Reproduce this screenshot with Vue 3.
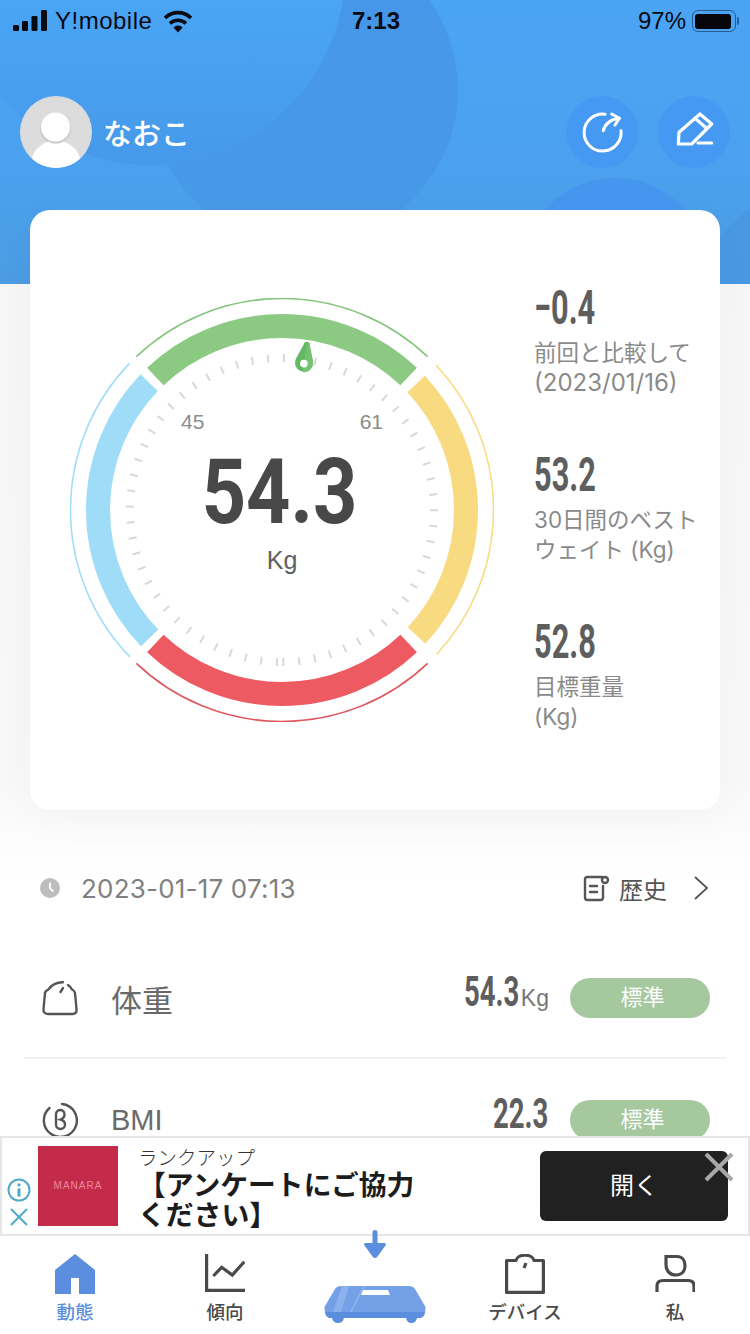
<script setup>
const cx = 212
const cy = 212

function polar(r, deg) {
  const a = ((deg - 90) * Math.PI) / 180
  return [cx + r * Math.cos(a), cy + r * Math.sin(a)]
}

function arc(r, from, to) {
  const [x1, y1] = polar(r, from)
  const [x2, y2] = polar(r, to)
  return `M${x1.toFixed(2)} ${y1.toFixed(2)}A${r} ${r} 0 0 1 ${x2.toFixed(2)} ${y2.toFixed(2)}`
}

const zones = [
  { color: '#8cca84', line: '#84c47c', from: -43.5, to: 43.5 },
  { color: '#f8da80', line: '#f8da80', from: 46.8, to: 133 },
  { color: '#ee5a62', line: '#e0585e', from: 136.5, to: 223.5 },
  { color: '#9fdcf8', line: '#9fdcf8', from: 226, to: 313.8 }
]

const ticks = []
for (let k = 0; k < 61; k++) {
  const deg = 179.5 - k * 5.96
  const [x1, y1] = polar(148, deg)
  const [x2, y2] = polar(156, deg)
  ticks.push({ x1, y1, x2, y2 })
}

const stats = [
  { value: '−0.4', lines: ['前回と比較して', '(2023/01/16)'] },
  { value: '53.2', lines: ['30日間のベスト', 'ウェイト (Kg)'] },
  { value: '52.8', lines: ['目標重量', '(Kg)'] }
]
</script>

<template>
  <div class="screen">
    <div class="top">
      <div class="blob blob-b"></div>
      <div class="blob blob-a"></div>
      <div class="blob blob-c"></div>
      <div class="blob blob-d"></div>
      <div class="status">
        <div class="status-left">
          <svg width="34" height="22" viewBox="0 0 34 22" fill="#0a0a12">
            <rect x="0" y="15" width="6" height="6" rx="1.2" />
            <rect x="9" y="11" width="6" height="10" rx="1.2" />
            <rect x="18.5" y="6" width="6" height="15" rx="1.2" />
            <rect x="28" y="0" width="6" height="21" rx="1.2" />
          </svg>
          <span class="carrier">Y!mobile</span>
          <svg class="wifi" width="30" height="24" viewBox="0 0 30 24" fill="none" stroke="#0a0a12" stroke-width="3.6">
            <path d="M2 9a18.5 18.5 0 0 1 26 0" />
            <path d="M7 14.5a11.5 11.5 0 0 1 16 0" />
            <path d="M15 23.5l-4.600-5a6.400 6.400 0 0 1 9.200 0z" fill="#0a0a12" stroke="none" />
          </svg>
        </div>
        <span class="clock">7:13</span>
        <div class="status-right">
          <span class="pct">97%</span>
          <div class="battery"><div class="battery-fill"></div></div>
          <div class="battery-tip"></div>
        </div>
      </div>
      <div class="profile">
        <div class="avatar">
          <svg width="72" height="72" viewBox="0 0 72 72">
            <circle cx="36" cy="36" r="36" fill="#dcdcdc" />
            <circle cx="35.5" cy="33" r="15.5" fill="#cdcdcd" />
            <circle cx="35.5" cy="31" r="14.5" fill="#fff" />
            <path d="M12 62.800C13 54 22 48 28 45.500c5 3 11 3 15.500 0C50 48 59 54 60 62.800A36 36 0 0 1 12 62.800z" fill="#fff" />
          </svg>
        </div>
        <span class="name">なおこ</span>
        <div class="round-btn first">
          <svg width="42" height="42" viewBox="0 0 42 42" fill="none" stroke="#fff" stroke-width="3" stroke-linecap="round" stroke-linejoin="round">
            <path d="M24 3.200A18.500 18.500 0 1 0 40 19.700" />
            <path d="M22.300 19.700C24 13 30 8.500 38.300 7.300" />
            <path d="M30.700 3l7.600 4.300L34 14" />
          </svg>
        </div>
        <div class="round-btn">
          <svg width="42" height="42" viewBox="0 0 42 42" fill="none" stroke="#fff" stroke-width="3.2" stroke-linejoin="round" stroke-linecap="round">
            <path d="M5.300 33L6 21.300 27 3l11.700 10-20 20z" />
            <path d="M22 7.300l11 9.500" />
            <path d="M25 32h13.700" />
          </svg>
        </div>
      </div>
    </div>

    <div class="card">
      <div class="gauge">
        <svg width="424" height="424" viewBox="0 0 424 424" fill="none">
          <g v-for="z in zones" :key="z.from">
            <path :d="arc(211.5, z.from, z.to)" :stroke="z.line" stroke-width="1.6" />
            <path :d="arc(184, z.from, z.to)" :stroke="z.color" stroke-width="24" />
          </g>
          <line
            v-for="(t, i) in ticks"
            :key="i"
            :x1="t.x1"
            :y1="t.y1"
            :x2="t.x2"
            :y2="t.y2"
            stroke="#d8d8d8"
            stroke-width="2"
          />
          <g transform="rotate(8.5 212 212)">
            <path d="M209 45a3 3 0 0 1 6 0l5.500 15a9 9 0 1 1-17 0z" fill="#63b963" />
            <path d="M212 42a3 3 0 0 1 3 3l5.500 15a9 9 0 0 1-8.500 12.500z" fill="#76c274" />
            <circle cx="212" cy="64" r="3.8" fill="#fff" />
          </g>
        </svg>
        <div class="gauge-text">
          <div class="range"><span>45</span><span>61</span></div>
          <div class="weight"><span>54.3</span></div>
          <div class="unit">Kg</div>
        </div>
      </div>
      <div class="stats">
        <div v-for="s in stats" :key="s.value" class="stat">
          <div class="stat-value"><span>{{ s.value }}</span></div>
          <div v-for="l in s.lines" :key="l" class="stat-line">{{ l }}</div>
        </div>
      </div>
    </div>

    <div class="meta">
      <svg width="20" height="20" viewBox="0 0 20 20">
        <circle cx="10" cy="10" r="10" fill="#bdbdbd" />
        <path d="M10 4.500V10.500l3.500 3" fill="none" stroke="#fff" stroke-width="1.8" />
      </svg>
      <span class="date">2023-01-17 07:13</span>
      <svg class="hist-icon" width="28" height="28" viewBox="0 0 28 28" fill="none" stroke="#555" stroke-width="2.4" stroke-linecap="round">
        <path d="M19 3H4.500Q2 3 2 5.500v18Q2 26 4.500 26h13q2.500 0 2.500-2.500V12" />
        <path d="M7 12h7M7 18h7" />
        <circle cx="22" cy="6" r="3" />
      </svg>
      <span class="hist">歴史</span>
      <svg width="16" height="26" viewBox="0 0 16 26" fill="none" stroke="#555" stroke-width="1.8">
        <path d="M2 2l12 11L2 24" />
      </svg>
    </div>

    <div class="row divided">
      <svg width="36" height="36" viewBox="0 0 36 36" fill="none" stroke="#555" stroke-width="2.4" stroke-linejoin="round" stroke-linecap="round">
        <path d="M21 2.200C15 2 9 5 6.500 9.500 4 10.500 3.300 11 3 13L1.500 29Q1.200 34 6.500 34h24q4.500 0 4-5L33 13q-.5-2.500-3-3.500-1.500-3-4-4.500" />
        <path d="M21 8l-2.500 4" />
      </svg>
      <span class="row-name">体重</span>
      <div class="row-value"><span class="num">54.3</span><span class="row-unit">Kg</span></div>
      <div class="pill">標準</div>
    </div>
    <div class="row">
      <svg width="36" height="36" viewBox="0 0 36 36" fill="none" stroke="#555" stroke-width="2.4" stroke-linecap="round">
        <path d="M20 2A16.500 16.500 0 1 1 7.500 6" />
        <path d="M14 12.500C14 6.500 22.500 6.500 22.500 12.500c0 2.500-1.500 4-4 5 3 .8 4.500 2.500 4.500 5 0 6-9 6-9 0z" />
      </svg>
      <span class="row-name bmi">BMI</span>
      <div class="row-value"><span class="num">22.3</span></div>
      <div class="pill">標準</div>
    </div>

    <div class="bottom">
      <div class="ad">
        <div class="ad-marks">
          <svg width="24" height="24" viewBox="0 0 24 24" fill="none" stroke="#4fa9c9" stroke-width="2">
            <circle cx="12" cy="12" r="10.5" />
            <path d="M12 10.500v8" stroke-width="3" />
            <circle cx="12" cy="6.800" r="1.6" fill="#4fa9c9" stroke="none" />
          </svg>
          <svg width="22" height="22" viewBox="0 0 22 22" fill="none" stroke="#4fa9c9" stroke-width="2">
            <path d="M3 3l16 16M19 3L3 19" />
          </svg>
        </div>
        <div class="ad-logo">MANARA</div>
        <div class="ad-copy">
          <div class="ad-brand">ランクアップ</div>
          <div class="ad-title">【アンケートにご協力<br />ください】</div>
        </div>
        <div class="ad-open">開く</div>
        <svg class="ad-close" width="32" height="32" viewBox="0 0 32 32" fill="none" stroke="#a8a8a8" stroke-width="4">
          <path d="M3 3l26 26M29 3L3 29" />
        </svg>
      </div>
      <nav class="tabs">
        <div class="tab active">
          <svg width="40" height="40" viewBox="0 0 40 40" fill="#5b8ede">
            <path d="M20 0l20 16v24H24V24h-8v16H0V16z" />
          </svg>
          <span>動態</span>
        </div>
        <div class="tab">
          <svg width="40" height="40" viewBox="0 0 40 40" fill="none" stroke="#4a4a4a" stroke-width="3.2">
            <path d="M1.600 0v36.400H40" />
            <path d="M8.300 22l8.400-8.700L27.300 21 39.300 7.700" />
          </svg>
          <span>傾向</span>
        </div>
        <div class="tab center">
          <svg class="drop" width="24" height="30" viewBox="0 0 24 30" fill="#5b8ede">
            <path d="M9.500 2.500a2.500 2.500 0 0 1 5 0V13H21q3 0 1.500 2.500l-8 11q-2.500 3-5 0l-8-11Q0 13 3 13h6.500z" />
          </svg>
          <svg class="scale" width="102" height="38" viewBox="0 0 102 38">
            <path d="M1 24h100q1 5-4 8h-4q-1 5-5.500 5T82 32H20q-1 5-6 5t-6-5H5q-5-3-4-8z" fill="#5b8ede" />
            <path d="M17 0h68q4 0 6 3l10 17q1.500 4-1 6H2q-2.500-2-1-6L11 3q2-3 6-3z" fill="#74a0e8" />
            <path d="M18 0h7L17 26H9z" fill="#8cb2ee" />
            <path d="M39 0h2L28 26h-2z" fill="#8cb2ee" />
            <path d="M39 4h25l2 5H37z" fill="#fff" />
          </svg>
        </div>
        <div class="tab">
          <svg width="40" height="40" viewBox="0 0 40 40" fill="none" stroke="#4a4a4a" stroke-width="3.2" stroke-linejoin="round">
            <path d="M1.600 38.400V6.500H11C12-.5 28-.5 29 6.500h9.400v31.900z" />
            <path d="M21 9l-2 5" />
          </svg>
          <span>デバイス</span>
        </div>
        <div class="tab">
          <svg width="40" height="40" viewBox="0 0 40 40" fill="none" stroke="#4a4a4a" stroke-width="3.2">
            <path d="M11 2.500h11c5 0 8 3.500 8 9 0 6.500-4 9.500-9 9.500-6 0-10-4-10-10z" />
            <path d="M2 38v-6q0-5.500 6-5.500h25q6 0 6 5.500v6" />
          </svg>
          <span>私</span>
        </div>
      </nav>
    </div>
  </div>
</template>

<style scoped>
.screen {
  position: relative;
  width: 750px;
  height: 1334px;
  overflow: hidden;
  font-family: "Liberation Sans", "Noto Sans CJK JP", sans-serif;
  background: linear-gradient(#f6f6f6 284px, #f8f8f8 780px, #fff 880px);
  color: #555;
}
.top {
  position: relative;
  height: 284px;
  overflow: hidden;
  background: linear-gradient(#4aa4f4, #4ba1ee 60%, #4b9ce2);
}
.blob {
  position: absolute;
  border-radius: 50%;
}
.blob-a {
  left: -45px;
  top: -225px;
  width: 390px;
  height: 390px;
  background: linear-gradient(#4aa6f6 55%, #4799e9);
}
.blob-b {
  left: 148px;
  top: -65px;
  width: 310px;
  height: 310px;
  background: linear-gradient(#4697ea, #4899e6);
}
.blob-c {
  left: 530px;
  top: 178px;
  width: 170px;
  height: 150px;
  background: #4696f0;
}
.blob-d {
  left: 705px;
  top: 195px;
  width: 190px;
  height: 190px;
  background: #4898e4;
}
.status {
  position: relative;
  z-index: 2;
  display: flex;
  align-items: center;
  justify-content: space-between;
  height: 42px;
  padding: 0 11px 0 13px;
  font-size: 24px;
  color: #0a0a14;
}
.status-left {
  display: flex;
  align-items: center;
  gap: 8px;
  width: 300px;
}
.carrier {
  letter-spacing: 0.5px;
}
.wifi {
  margin-left: 3px;
}
.clock {
  font-weight: 700;
}
.status-right {
  display: flex;
  align-items: center;
  justify-content: flex-end;
  width: 300px;
}
.pct {
  margin-right: 6px;
}
.battery {
  box-sizing: border-box;
  width: 44px;
  height: 22px;
  padding: 2.5px;
  border: 1.5px solid #2b5c8c;
  border-radius: 6px;
}
.battery-fill {
  width: 95%;
  height: 100%;
  border-radius: 3px;
  background: #05050a;
}
.battery-tip {
  width: 2px;
  height: 8px;
  margin-left: 1px;
  border-radius: 0 2px 2px 0;
  background: #2b5c8c;
}
.profile {
  position: relative;
  z-index: 2;
  display: flex;
  align-items: center;
  margin-top: 54px;
  padding: 0 20px;
}
.avatar {
  height: 72px;
}
.name {
  flex: 1;
  margin-left: 11px;
  font-size: 29px;
  font-weight: 500;
  color: #fff;
}
.round-btn {
  display: flex;
  align-items: center;
  justify-content: center;
  width: 72px;
  height: 72px;
  border-radius: 50%;
  background: #4599f3;
}
.round-btn.first {
  margin-right: 20px;
}
.card {
  position: relative;
  z-index: 3;
  box-sizing: border-box;
  display: flex;
  width: 690px;
  height: 600px;
  margin: -74px 0 0 30px;
  padding: 88px 0 0 40px;
  border-radius: 20px;
  background: #fff;
  box-shadow: 0 10px 40px rgba(0, 0, 0, 0.03);
}
.gauge {
  position: relative;
  width: 424px;
  height: 424px;
}
.gauge-text {
  position: absolute;
  left: 0;
  right: 0;
  top: 112px;
  text-align: center;
}
.range {
  display: flex;
  justify-content: space-between;
  padding: 0 111px;
  font-size: 21px;
  color: #8c8c8c;
}
.weight {
  margin-top: 8px;
  margin-left: -4px;
  height: 102px;
  font-family: Roboto, sans-serif;
  font-size: 90px;
  line-height: 102px;
  font-weight: 700;
  color: #484848;
}
.weight span {
  display: inline-block;
  transform: scaleX(0.86);
}
.unit {
  margin-top: 2px;
  font-size: 25px;
  color: #606060;
}
.stats {
  margin: -12px 0 0 40px;
}
.stat {
  height: 167px;
}
.stat-value {
  height: 44px;
  margin-bottom: 8px;
  font-family: Roboto, sans-serif;
  font-size: 48px;
  line-height: 44px;
  font-weight: 700;
  color: #5e5e5e;
}
.stat-value span {
  display: inline-block;
  transform: scaleX(0.64);
  transform-origin: left;
}
.stat-line {
  font-family: Inter, "Noto Sans CJK JP", sans-serif;
  font-size: 22.5px;
  line-height: 30px;
  color: #8a8a8a;
  white-space: nowrap;
}
.stat:first-child .stat-line:last-child {
  font-size: 24px;
}
.meta {
  display: flex;
  align-items: center;
  margin-top: 62px;
  padding: 0 41px 0 40px;
  height: 32px;
}
.date {
  flex: 1;
  margin-left: 21px;
  font-family: Inter, sans-serif;
  font-size: 26px;
  letter-spacing: 0.2px;
  color: #808080;
}
.hist {
  margin: 0 26px 0 8px;
  font-size: 24px;
}
.row {
  display: flex;
  align-items: center;
  margin: 0 24px;
  padding: 0 16px 0 18px;
  height: 122px;
}
.meta + .row {
  margin-top: 45px;
}
.divided {
  box-sizing: border-box;
  height: 110px;
  padding-bottom: 10px;
  border-bottom: 2px solid #f2f2f2;
}
.row-name {
  flex: 1;
  margin-left: 33px;
  font-size: 31px;
  color: #6a6a6a;
}
.row-name.bmi {
  font-size: 29px;
}
.row-value {
  display: flex;
  align-items: baseline;
  margin-right: 21px;
  margin-bottom: 14px;
}
.num {
  display: inline-block;
  width: 56px;
  font-family: Roboto, sans-serif;
  font-size: 43px;
  font-weight: 700;
  color: #5e5e5e;
  white-space: nowrap;
  transform: scaleX(0.64);
  transform-origin: left;
}
.row-unit {
  margin-left: 1px;
  font-size: 23px;
  color: #777;
}
.pill {
  box-sizing: border-box;
  width: 140px;
  height: 40px;
  padding-left: 5px;
  border-radius: 20px;
  background: #a5c89e;
  color: #fff;
  font-size: 22px;
  line-height: 40px;
  text-align: center;
}
.bottom {
  position: absolute;
  left: 0;
  right: 0;
  bottom: 0;
  z-index: 5;
  height: 198px;
  background: #fff;
}
.ad {
  position: relative;
  box-sizing: border-box;
  display: flex;
  align-items: center;
  height: 100px;
  border: 2px solid #e6e6e6;
  background: #fff;
  color: #222;
}
.ad-marks {
  display: flex;
  flex-direction: column;
  align-items: center;
  gap: 4px;
  width: 30px;
  margin: 34px 0 0 2px;
}
.ad-logo {
  width: 80px;
  height: 80px;
  margin-left: 4px;
  background: #c42a4a;
  color: #ec8a9c;
  font-size: 10px;
  letter-spacing: 1px;
  line-height: 80px;
  text-align: center;
}
.ad-copy {
  flex: 1;
  margin-left: 20px;
}
.ad-brand {
  padding-top: 5px;
  font-size: 19.5px;
  font-weight: 300;
  line-height: 22px;
  color: #333;
}
.ad-title {
  margin-top: 2px;
  font-size: 27.8px;
  line-height: 30px;
  font-weight: 700;
  color: #1c1c1c;
}
.ad-open {
  width: 188px;
  height: 70px;
  margin-right: 20px;
  border-radius: 6px;
  background: #212121;
  color: #fff;
  font-size: 24px;
  line-height: 70px;
  text-align: center;
}
.ad-close {
  position: absolute;
  right: 13px;
  top: 13px;
}
.tabs {
  display: grid;
  grid-template-columns: repeat(5, 150px);
  height: 98px;
}
.tab {
  position: relative;
  display: flex;
  flex-direction: column;
  align-items: center;
  padding-top: 18px;
  font-size: 18.5px;
  font-weight: 500;
  color: #4a4a4a;
}
.tab span {
  margin-top: 6px;
  line-height: 26px;
  white-space: nowrap;
}
.tab.active {
  color: #5b8ede;
}
.drop {
  position: absolute;
  top: -6px;
  left: 63px;
}
.scale {
  margin-top: 32px;
}
</style>
